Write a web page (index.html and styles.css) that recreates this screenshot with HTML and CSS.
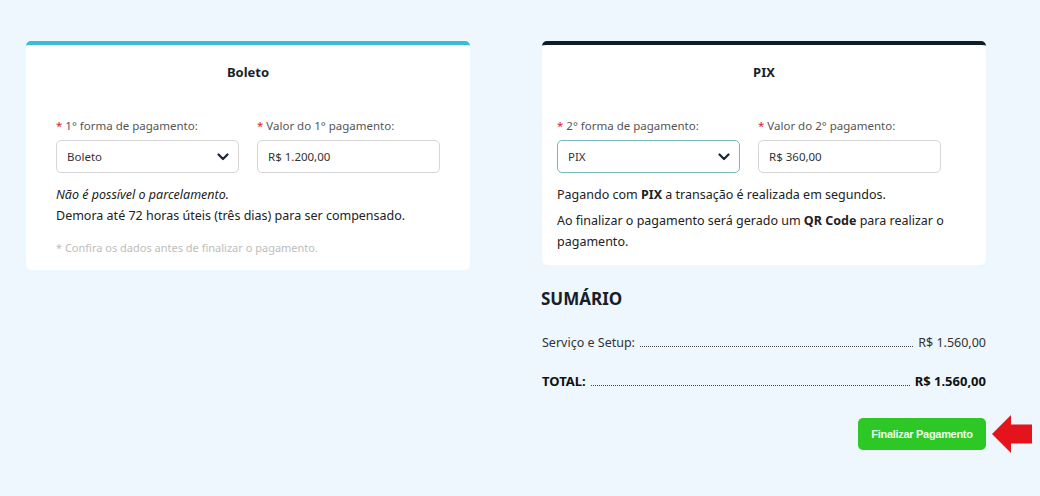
FILE: index.html
```html
<!DOCTYPE html>
<html lang="pt-BR">
<head>
<meta charset="utf-8">
<title>Pagamento</title>
<link rel="stylesheet" href="styles.css">
</head>
<body>
<div class="page">
  <div class="col">
    <section class="card card-boleto">
      <h2 class="card-title">Boleto</h2>
      <div class="fields">
        <div class="field">
          <label class="label"><span class="req">*</span> 1° forma de pagamento:</label>
          <div class="select">
            <span>Boleto</span>
            <svg class="chev" width="12" height="8" viewBox="0 0 12 8"><path d="M1.5 1.5 L6 6 L10.5 1.5" fill="none" stroke="#1d2733" stroke-width="2.2" stroke-linecap="round" stroke-linejoin="round"/></svg>
          </div>
        </div>
        <div class="field">
          <label class="label"><span class="req">*</span> Valor do 1° pagamento:</label>
          <div class="input">R$ 1.200,00</div>
        </div>
      </div>
      <p class="info"><em>Não é possível o parcelamento.</em><br><span>Demora até 72 horas úteis (três dias) para ser compensado.</span></p>
      <p class="note">* Confira os dados antes de finalizar o pagamento.</p>
    </section>
  </div>
  <div class="col">
    <section class="card card-pix">
      <h2 class="card-title">PIX</h2>
      <div class="fields">
        <div class="field">
          <label class="label"><span class="req">*</span> 2° forma de pagamento:</label>
          <div class="select focused">
            <span>PIX</span>
            <svg class="chev" width="12" height="8" viewBox="0 0 12 8"><path d="M1.5 1.5 L6 6 L10.5 1.5" fill="none" stroke="#1d2733" stroke-width="2.2" stroke-linecap="round" stroke-linejoin="round"/></svg>
          </div>
        </div>
        <div class="field">
          <label class="label"><span class="req">*</span> Valor do 2° pagamento:</label>
          <div class="input">R$ 360,00</div>
        </div>
      </div>
      <p class="pix-text">Pagando com <b>PIX</b> a transação é realizada em segundos.</p>
      <p class="pix-text"><span>Ao finalizar o pagamento será gerado um </span><b>QR Code</b><span> para realizar o</span><br><span>pagamento.</span></p>
    </section>
    <div class="summary">
      <h3 class="summary-title">SUMÁRIO</h3>
      <div class="row">
        <span>Serviço e Setup:</span><span class="dots"></span><span>R$ 1.560,00</span>
      </div>
      <div class="row total">
        <span>TOTAL:</span><span class="dots"></span><span>R$ 1.560,00</span>
      </div>
    </div>
    <div class="actions">
      <button class="btn">Finalizar Pagamento</button>
      <svg class="arrow" width="40" height="38" viewBox="0 0 40 38"><path d="M0 19 L19 0 L19 9.5 L40 9.5 L40 28.5 L19 28.5 L19 38 Z" fill="#e3141c"/></svg>
    </div>
  </div>
</div>
</body>
</html>
```
FILE: styles.css
```css
* { box-sizing: border-box; }
html, body { margin: 0; padding: 0; }
body {
  background: #edf7fd;
  font-family: "Noto Sans", "Open Sans", sans-serif;
  color: #222;
  width: 1040px;
  height: 496px;
  overflow: hidden;
}
.page {
  display: flex;
  gap: 72px;
  padding: 41px 0 0 26px;
}
.col { width: 444px; }
.card {
  background: #fff;
  border-radius: 5px;
  border-top: 4px solid #3bbcd2;
}
.card-boleto { padding: 0 30px 14px; }
.card-pix { border-top-color: #0f1d2a; padding: 0 15px 13px; }
.card-title {
  margin: 0;
  text-align: center;
  font-size: 13px;
  font-weight: 700;
  color: #1b1f29;
  padding: 17px 0 0;
  line-height: 20px;
}
.fields {
  display: flex;
  gap: 18px;
  margin-top: 36px;
}
.field { width: 183px; }
.label {
  display: block;
  font-size: 11.5px;
  color: #555;
  line-height: 16px;
  margin-bottom: 6px;
}
.req { color: #d9232e; }
.select, .input {
  height: 33px;
  border: 1px solid #d6d6d6;
  border-radius: 5px;
  font-size: 11.5px;
  color: #333;
  display: flex;
  align-items: center;
  padding: 0 10px;
}
.select { justify-content: space-between; padding-right: 9px; }
.select.focused { border-color: #7bb6bf; }
.info {
  margin: 11px 0 0;
  font-size: 12.5px;
  line-height: 21px;
  color: #222;
}
.note {
  margin: 14px 0 0;
  font-size: 11px;
  color: #bdbdbd;
  line-height: 16px;
}
.pix-text {
  margin: 11px 0 0;
  font-size: 12.5px;
  line-height: 21px;
  color: #222;
}
.pix-text + .pix-text { margin-top: 5px; }
.pix-text b { font-weight: 700; }
.summary { margin-top: 22px; }
.summary-title {
  margin: 0 0 0 -1px;
  font-size: 17px;
  font-weight: 700;
  color: #15202c;
  line-height: 24px;
}
.row {
  display: flex;
  align-items: baseline;
  font-size: 12.5px;
  color: #333;
  margin-top: 23px;
  line-height: 18px;
}
.row + .row { margin-top: 20px; }
.row.total { font-weight: 700; color: #111; font-size: 13px; }
.dots {
  flex: 1;
  border-bottom: 1px dotted #444;
  margin: 0 5px;
}
.actions {
  display: flex;
  justify-content: flex-end;
  align-items: center;
  margin-top: 28px;
  position: relative;
}
.btn {
  width: 128px;
  height: 32px;
  border: 0;
  border-radius: 5px;
  background: #2dc826;
  color: #eaffea;
  font-family: "Liberation Sans", Arial, sans-serif;
  font-weight: 700;
  font-size: 11px;
  letter-spacing: -0.3px;
  padding: 0;
}
.arrow { position: absolute; right: -46px; top: -3px; }
```
